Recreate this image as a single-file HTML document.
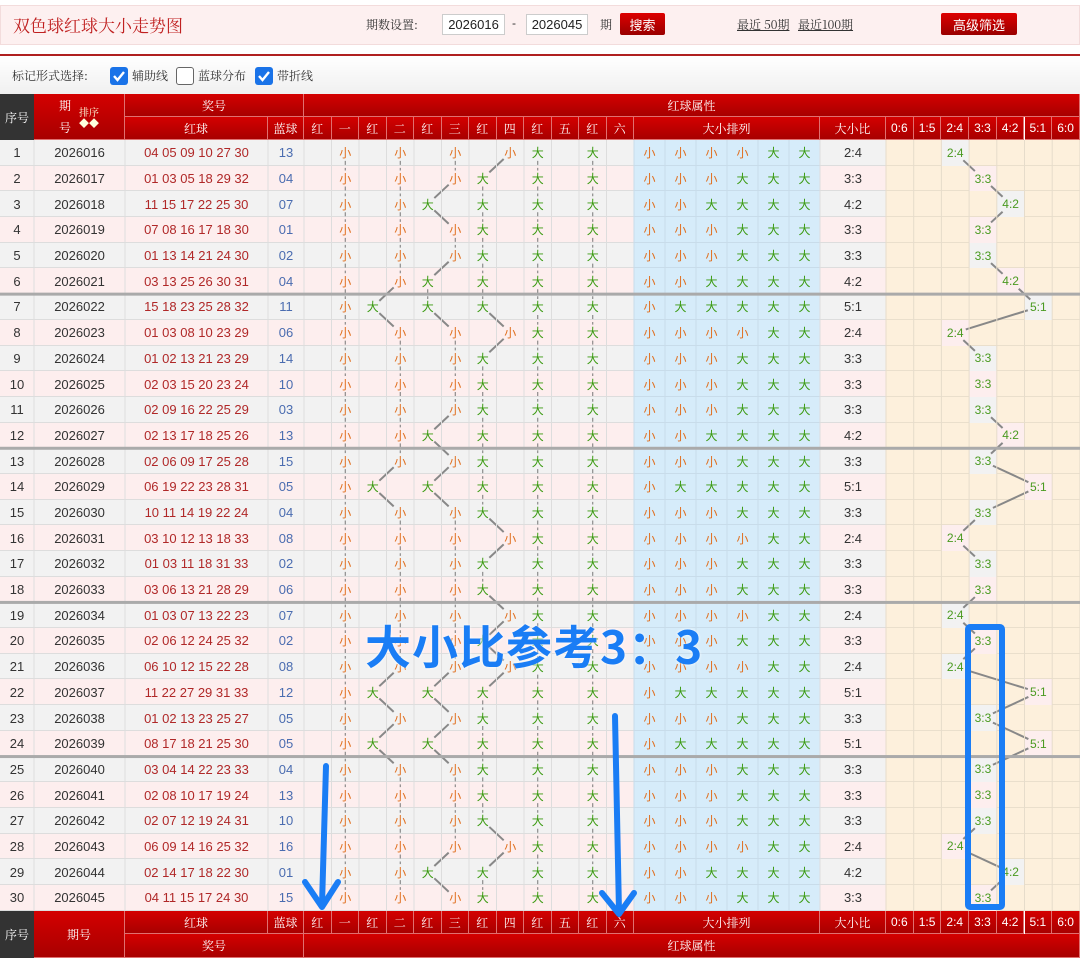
<!DOCTYPE html>
<html><head><meta charset="utf-8">
<style>
*{margin:0;padding:0;box-sizing:border-box}
body{width:1080px;height:968px;background:#fff;position:relative;overflow:hidden;font-family:"Liberation Sans","Noto Sans CJK SC",sans-serif}
.a{position:absolute}
.c{position:absolute;display:flex;align-items:center;justify-content:center;white-space:nowrap}
.hd{background:linear-gradient(#d40000,#a80000);color:#fff;font-size:12px;border-right:1px solid #e07070;border-bottom:1px solid #e07070;font-family:"Noto Serif CJK SC",serif}
.dk{background:#333;color:#fff;font-size:12px;font-family:"Noto Serif CJK SC",serif}
.btn{background:linear-gradient(#d00,#900);color:#fff;font-size:13px;border-radius:2px;font-family:"Noto Sans CJK SC",sans-serif}
.inp{border:1px solid #ccc;background:#fff;font-size:13px;color:#222}
.cb{position:absolute;width:18px;height:18px;border-radius:3px;top:67px}
</style></head><body>
<div class="a" style="left:0;top:5px;width:1080px;height:40px;background:#fdf0f0;border:1px solid #f3dcdc"></div>
<div class="a" style="left:13px;top:12px;font-size:17px;color:#c02020;font-family:'Noto Serif CJK SC',serif">双色球红球大小走势图</div>
<div class="a" style="left:366px;top:16px;font-size:12px;color:#333;font-family:'Noto Serif CJK SC',serif">期数设置:</div>
<div class="c inp" style="left:442px;top:14px;width:63px;height:21px">2026016</div>
<div class="a" style="left:512px;top:16px;font-size:12px;color:#333">-</div>
<div class="c inp" style="left:526px;top:14px;width:62px;height:21px">2026045</div>
<div class="a" style="left:600px;top:16px;font-size:12px;color:#333;font-family:'Noto Serif CJK SC',serif">期</div>
<div class="c btn" style="left:620px;top:13px;width:45px;height:22px">搜索</div>
<div class="a" style="left:737px;top:16px;font-size:12px;color:#333;text-decoration:underline;font-family:'Noto Serif CJK SC',serif">最近 50期</div>
<div class="a" style="left:798px;top:16px;font-size:12px;color:#333;text-decoration:underline;font-family:'Noto Serif CJK SC',serif">最近100期</div>
<div class="c btn" style="left:941px;top:13px;width:76px;height:22px">高级筛选</div>
<div class="a" style="left:0;top:54px;width:1080px;height:2px;background:#b02020"></div>
<div class="a" style="left:0;top:56px;width:1080px;height:38px;background:linear-gradient(#fff,#f0f0f0)"></div>
<div class="a" style="left:12px;top:67px;font-size:12px;color:#333;font-family:'Noto Serif CJK SC',serif">标记形式选择:</div>
<div class="cb" style="left:110px;background:#1a73e8"><svg width="18" height="18"><path d="M4 9l3.5 4L14 5" stroke="#fff" stroke-width="2.4" fill="none"/></svg></div>
<div class="a" style="left:132px;top:67px;font-size:12px;color:#333;font-family:'Noto Serif CJK SC',serif">辅助线</div>
<div class="cb" style="left:176px;border:1.5px solid #666;background:#fff"></div>
<div class="a" style="left:198px;top:67px;font-size:12px;color:#333;font-family:'Noto Serif CJK SC',serif">蓝球分布</div>
<div class="cb" style="left:255px;background:#1a73e8"><svg width="18" height="18"><path d="M4 9l3.5 4L14 5" stroke="#fff" stroke-width="2.4" fill="none"/></svg></div>
<div class="a" style="left:277px;top:67px;font-size:12px;color:#333;font-family:'Noto Serif CJK SC',serif">带折线</div>
<div id="t"></div>
<svg id="s" class="a" style="left:0;top:0" width="1080" height="968"></svg>
<!-- annotation -->
<div class="a" style="left:365px;top:612px;font-size:46px;font-weight:bold;color:#1a7df5;font-family:'Noto Sans CJK SC',sans-serif;letter-spacing:1px;text-shadow:0 0 3px #fff">大小比参考3：3</div>
<svg class="a" style="left:0;top:0" width="1080" height="968">
<rect x="968" y="627" width="34" height="280" rx="2" fill="none" stroke="#1a7df5" stroke-width="6"/>
<path d="M326 766 L322 905" stroke="#1a7df5" stroke-width="6" stroke-linecap="round" fill="none"/>
<path d="M305 882 L322 907 L338 882" stroke="#1a7df5" stroke-width="6" stroke-linecap="round" stroke-linejoin="round" fill="none"/>
<path d="M615 716 L619 912" stroke="#1a7df5" stroke-width="6" stroke-linecap="round" fill="none"/>
<path d="M602 893 L619 914 L634 893" stroke="#1a7df5" stroke-width="6" stroke-linecap="round" stroke-linejoin="round" fill="none"/>
</svg>
<script>
var D=[["2026016","04 05 09 10 27 30","13"],["2026017","01 03 05 18 29 32","04"],["2026018","11 15 17 22 25 30","07"],["2026019","07 08 16 17 18 30","01"],["2026020","01 13 14 21 24 30","02"],["2026021","03 13 25 26 30 31","04"],["2026022","15 18 23 25 28 32","11"],["2026023","01 03 08 10 23 29","06"],["2026024","01 02 13 21 23 29","14"],["2026025","02 03 15 20 23 24","10"],["2026026","02 09 16 22 25 29","03"],["2026027","02 13 17 18 25 26","13"],["2026028","02 06 09 17 25 28","15"],["2026029","06 19 22 23 28 31","05"],["2026030","10 11 14 19 22 24","04"],["2026031","03 10 12 13 18 33","08"],["2026032","01 03 11 18 31 33","02"],["2026033","03 06 13 21 28 29","06"],["2026034","01 03 07 13 22 23","07"],["2026035","02 06 12 24 25 32","02"],["2026036","06 10 12 15 22 28","08"],["2026037","11 22 27 29 31 33","12"],["2026038","01 02 13 23 25 27","05"],["2026039","08 17 18 21 25 30","05"],["2026040","03 04 14 22 23 33","04"],["2026041","02 08 10 17 19 24","13"],["2026042","02 07 12 19 24 31","10"],["2026043","06 09 14 16 25 32","16"],["2026044","02 14 17 18 22 30","01"],["2026045","04 11 15 17 24 30","15"]];
var h='',s='',T0=140,RH=25.69;
function c(x,y,w,hh,cls,txt,st){h+='<div class="c '+(cls||'')+'" style="left:'+x+'px;top:'+y+'px;width:'+w+'px;height:'+hh+'px;'+(st||'')+'">'+txt+'</div>';}
var PW=27.5,PX=304,LX=634,LW=31,RX=886,RW=27.7;
// header
c(0,94,34,46,'dk','序号');
c(34,94,91,46,'hd','<div style="line-height:22px;text-align:center">期<br>号</div><div style="font-size:10px;line-height:11px;margin-left:8px;text-align:center;color:#ffd">排序<br>◆◆</div>');
c(125,94,179,23,'hd','奖号');c(304,94,776,23,'hd','红球属性');
c(125,117,143,23,'hd','红球');c(268,117,36,23,'hd','蓝球');
var L=['红','一','红','二','红','三','红','四','红','五','红','六'];
function sub(y){for(var i=0;i<12;i++)c(PX+i*PW,y,PW,23,'hd',L[i]);c(LX,y,186,23,'hd','大小排列');c(820,y,66,23,'hd','大小比');var R=['0:6','1:5','2:4','3:3','4:2','5:1','6:0'];for(var i=0;i<7;i++)c(RX+i*RW,y,RW,23,'hd',R[i],'font-family:Liberation Sans,sans-serif');}
sub(117);
var prevP=null,prevR=null;
for(var r=0;r<30;r++){
 var y=T0+r*RH,d=D[r],nums=d[1].split(' ').map(Number),bg=r%2?'#fdeeee':'#f2f2f2';
 h+='<div class="a" style="left:0;top:'+y+'px;width:886px;height:'+RH+'px;background:'+bg+';border-bottom:1px solid #ddd"></div>';
 h+='<div class="a" style="left:'+LX+'px;top:'+y+'px;width:186px;height:'+RH+'px;background:#d6ecfa;border-bottom:1px solid #c8dcea"></div>';
 h+='<div class="a" style="left:'+RX+'px;top:'+y+'px;width:194px;height:'+RH+'px;background:#fdf0dc;border-bottom:1px solid #eadfcc"></div>';
 var fs='font-size:13px;color:#333';
 c(0,y,34,RH,'',r+1,fs);c(34,y,91,RH,'',d[0],fs);
 c(125,y,143,RH,'',d[1],'font-size:13px;color:#b02828');c(268,y,36,RH,'',d[2],'font-size:13px;color:#4a6cb0');
 var big=0,pos=[];
 for(var k=0;k<6;k++){var b=nums[k]>=17;if(b)big++;var col=k*2+(b?0:1);pos.push(col);
  c(PX+col*PW,y,PW,RH,'',b?'大':'小','font-size:12px;color:'+(b?'#3a9a10':'#e07020'));
  c(LX+k*LW,y,LW,RH,'',b?'大':'小','font-size:12px;color:'+(b?'#3a9a10':'#e07020'));}
 c(820,y,66,RH,'',big+':'+(6-big),fs);
 var ri=big;c(RX+ri*RW,y,RW,RH,'',big+':'+(6-big),'font-size:12px;color:#4a9a20;background:'+(r%2?'#fdeeee':'#f2f2f2'));
 var cy=y+RH/2;
 if(prevP){for(var k=0;k<6;k++){var x1=PX+prevP[k]*PW+PW/2,x2=PX+pos[k]*PW+PW/2,y1=cy-RH;
   if(x1==x2)s+='<line x1="'+x1+'" y1="'+(y1+8)+'" x2="'+x2+'" y2="'+(cy-8)+'" stroke="#777" stroke-width="1" stroke-dasharray="4,3"/>';
   else{var dx=x2-x1,dy=RH,l=Math.sqrt(dx*dx+dy*dy),o=9;s+='<line x1="'+(x1+dx/l*o)+'" y1="'+(y1+dy/l*o)+'" x2="'+(x2-dx/l*o)+'" y2="'+(cy-dy/l*o)+'" stroke="#888" stroke-width="2"/>';}}
  var x1=RX+prevR*RW+RW/2,x2=RX+ri*RW+RW/2,y1=cy-RH;
  if(x1!=x2){var dx=x2-x1,dy=RH,l=Math.sqrt(dx*dx+dy*dy),o=11;s+='<line x1="'+(x1+dx/l*o)+'" y1="'+(y1+dy/l*o)+'" x2="'+(x2-dx/l*o)+'" y2="'+(cy-dy/l*o)+'" stroke="#888" stroke-width="2"/>';}
 }
 prevP=pos;prevR=ri;
}
// grid lines
for(var i=0;i<=12;i++)s+='<line x1="'+(PX+i*PW)+'" y1="140" x2="'+(PX+i*PW)+'" y2="911" stroke="#ddd" stroke-width="1"/>';
for(var i=0;i<=6;i++)s+='<line x1="'+(LX+i*LW)+'" y1="140" x2="'+(LX+i*LW)+'" y2="911" stroke="#c8dcea" stroke-width="1"/>';
for(var i=0;i<=7;i++)s+='<line x1="'+(RX+i*RW)+'" y1="140" x2="'+(RX+i*RW)+'" y2="911" stroke="#e6dccb" stroke-width="1"/>';
[34,125,268,820].forEach(function(x){s+='<line x1="'+x+'" y1="140" x2="'+x+'" y2="911" stroke="#ddd" stroke-width="1"/>';});
[6,12,18,24].forEach(function(g){var y=T0+g*RH;s+='<rect x="0" y="'+(y-1.5)+'" width="1080" height="3" fill="#aaa"/>';});
// footer
c(0,911,34,47,'dk','序号');c(34,911,91,47,'hd','期号');
c(125,911,143,23,'hd','红球');c(268,911,36,23,'hd','蓝球');sub(911);
c(125,934,179,24,'hd','奖号');c(304,934,776,24,'hd','红球属性');
document.getElementById('t').innerHTML=h;document.getElementById('s').innerHTML=s;
</script>
</body></html>
